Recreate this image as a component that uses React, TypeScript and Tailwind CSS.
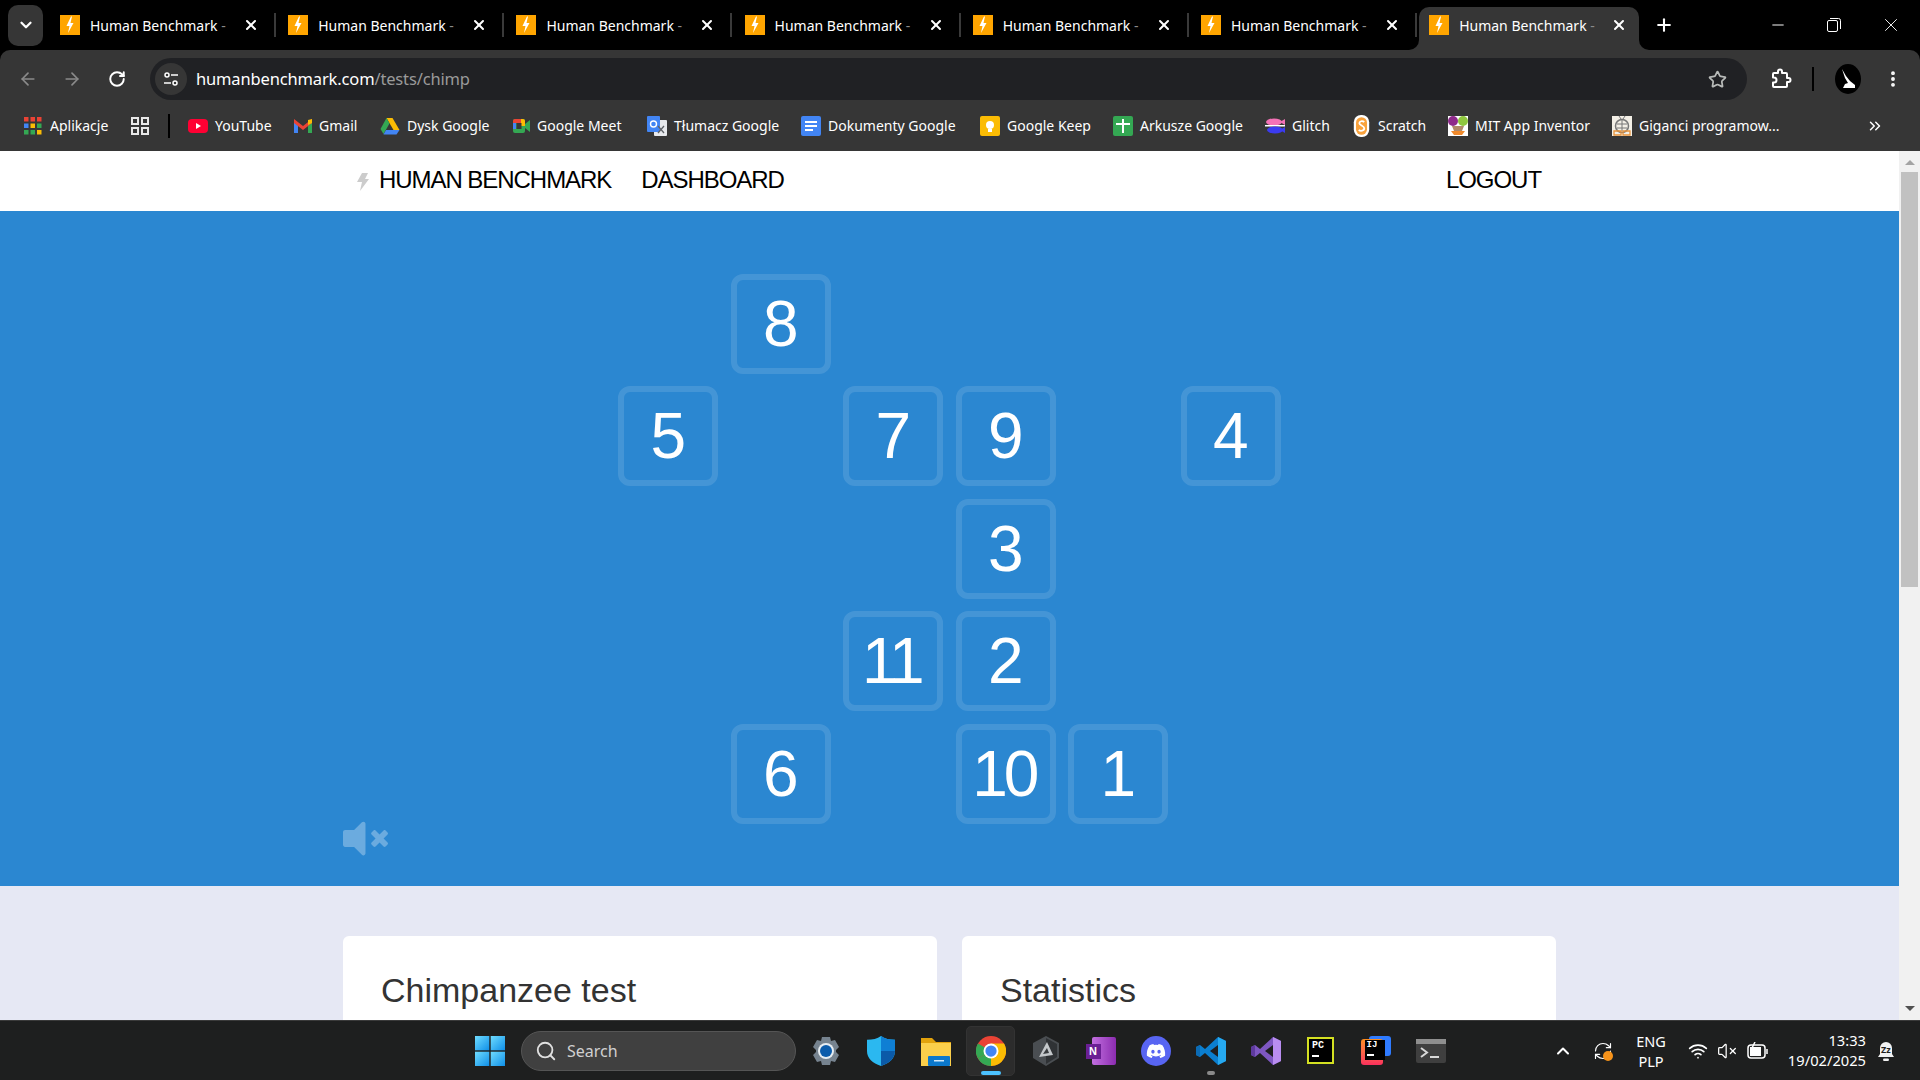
import React from 'react';
import {
  ArrowLeft,
  ArrowRight,
  ChevronDown,
  ChevronUp,
  ChevronsRight,
  EllipsisVertical,
  Minus,
  Plus,
  RefreshCw,
  RotateCw,
  Search,
  Star,
  VolumeX,
  Wifi,
  X,
} from 'lucide-react';
import { FaDiscord, FaVolumeMute } from 'react-icons/fa';

const uiFont = "font-['Noto_Sans',sans-serif]";

const Favicon = () => (
  <svg viewBox="0 0 20 20" className="w-5 h-5 shrink-0">
    <rect width="20" height="20" fill="#ffa500" />
    <path d="M11 1.500 6.500 11h3L8 18l5.500-10h-3l1.500-6.500z" fill="#fff" />
  </svg>
);

const TabTitle = () => (
  <span className="ml-[10px] w-[137px] whitespace-nowrap text-[14px] text-white">
    Human Benchmark <span className="text-[#8a8a8a]">-</span>
  </span>
);

const Tab = ({ active }: { active?: boolean }) => {
  if (active) {
    return (
      <div className="relative flex items-center w-[220px] h-[43px] mt-[7px] pb-[7px] pl-[10px] bg-[#363636] rounded-t-[10px]">
        <div className="absolute left-[-10px] bottom-0 w-[10px] h-[10px] bg-[#363636]">
          <div className="w-full h-full bg-black rounded-br-[10px]" />
        </div>
        <div className="absolute right-[-10px] bottom-0 w-[10px] h-[10px] bg-[#363636]">
          <div className="w-full h-full bg-black rounded-bl-[10px]" />
        </div>
        <Favicon />
        <TabTitle />
        <X size={16} strokeWidth={3} className="ml-[15px] text-white" />
      </div>
    );
  }
  return (
    <div className="flex items-center w-[228.2px] h-[50px] pl-[10px]">
      <Favicon />
      <TabTitle />
      <X size={16} strokeWidth={3} className="ml-[16px] text-white" />
      <div className="ml-[15px] w-[2px] h-[24px] bg-[#3a3a3a]" />
    </div>
  );
};

const TabStrip = () => (
  <div className={`flex h-[50px] shrink-0 bg-black ${uiFont}`}>
    <div className="flex items-center pl-2 w-[50px] shrink-0">
      <div className="flex items-center justify-center w-[35px] h-[41px] rounded-[10px] bg-[#363636]">
        <ChevronDown size={18} strokeWidth={3} className="text-white" />
      </div>
    </div>
    {[0, 1, 2, 3, 4, 5].map((i) => (
      <Tab key={i} />
    ))}
    <Tab active />
    <div className="flex items-center ml-[15px]">
      <Plus size={20} strokeWidth={2.5} className="text-white" />
    </div>
    <div className="flex items-center ml-auto text-white">
      <div className="flex justify-center w-[56px]">
        <Minus size={18} strokeWidth={1.3} />
      </div>
      <div className="flex justify-center w-[56px]">
        <svg viewBox="0 0 14 14" className="w-[14px] h-[14px]" fill="none" stroke="currentColor">
          <rect x="0.5" y="2.5" width="10" height="11" rx="1.5" />
          <path d="M3 0.5h8.5a2 2 0 0 1 2 2V11" />
        </svg>
      </div>
      <div className="flex justify-center w-[58px]">
        <X size={22} strokeWidth={1} />
      </div>
    </div>
  </div>
);

const ExtensionIcon = () => (
  <svg viewBox="0 0 22 22" className="w-[22px] h-[22px]" fill="none" stroke="#fff" strokeWidth="2" strokeLinejoin="round">
    <path d="M8 3.500a2 2 0 0 1 4 0V5h4a1 1 0 0 1 1 1v4h1.500a2 2 0 0 1 0 4H17v4a1 1 0 0 1-1 1H4a1 1 0 0 1-1-1v-3.500h1a2.500 2.500 0 0 0 0-5H3V6a1 1 0 0 1 1-1h4z" />
  </svg>
);

const Toolbar = () => (
  <div className="flex items-center h-[50px] shrink-0 pt-[8px] pl-[10px] bg-[#363636] rounded-t-[10px]">
    <div className="flex items-center justify-center w-[36px]">
      <ArrowLeft size={20} className="text-[#8a8a8a]" />
    </div>
    <div className="flex items-center justify-center w-[36px] ml-[8px]">
      <ArrowRight size={20} className="text-[#8a8a8a]" />
    </div>
    <div className="flex items-center justify-center w-[36px] ml-[9px]">
      <RotateCw size={18} strokeWidth={2.6} className="text-white" />
    </div>
    <div className={`flex items-center w-[1597px] h-[42px] ml-[15px] pl-[5px] pr-[20px] rounded-full bg-[#202124] ${uiFont}`}>
      <div className="flex items-center justify-center w-[32px] h-[32px] rounded-full bg-[#363636]">
        <svg viewBox="0 0 16 16" className="w-4 h-4" fill="none" stroke="#fff" strokeWidth="1.5">
          <circle cx="4" cy="4" r="2" />
          <path d="M8 4h7M1 12h7" />
          <circle cx="12" cy="12" r="2" />
        </svg>
      </div>
      <span className="ml-[9px] mt-[1px] text-[16.5px] tracking-[-0.15px] text-white">
        humanbenchmark.com<span className="text-[#9a9a9a]">/tests/chimp</span>
      </span>
      <Star size={19} strokeWidth={2.2} className="ml-auto text-[#b8bbb9]" />
    </div>
    <div className="flex items-center justify-center w-[40px] ml-[14px]">
      <ExtensionIcon />
    </div>
    <div className="w-[2px] h-[24px] ml-[11px] bg-black" />
    <svg viewBox="0 0 26 30" className="w-[26px] h-[30px] ml-[21px]">
      <ellipse cx="13" cy="15" rx="13" ry="15" fill="#000" />
      <path d="M7 5l4 7 4 5 5 4v3H8l2-4 3-1-3-5z" fill="#fff" />
    </svg>
    <EllipsisVertical size={20} strokeWidth={2.6} className="ml-[22px] text-white" />
  </div>
);

const AppsIcon = () => (
  <svg viewBox="0 0 18 18" className="w-[18px] h-[18px]">
    {['#ea4335', '#ea4335', '#ea4335', '#4285f4', '#fbbc04', '#34a853', '#34a853', '#34a853', '#fbbc04'].map((c, i) => (
      <rect key={i} x={(i % 3) * 6.5} y={Math.floor(i / 3) * 6.5} width="4.5" height="4.5" fill={c} />
    ))}
  </svg>
);

const YouTubeIcon = () => (
  <svg viewBox="0 0 20 20" className="w-5 h-5">
    <rect y="3" width="20" height="14" rx="4" fill="#ff0033" />
    <path d="M8 7l5 3-5 3z" fill="#fff" />
  </svg>
);

const GmailIcon = () => (
  <svg viewBox="0 0 18 18" className="w-[18px] h-[18px]">
    <path d="M0 5v11h4V8z" fill="#4285f4" />
    <path d="M14 8v8h4V5z" fill="#34a853" />
    <path d="M0 2l9 7 9-7v4L9 13 0 6z" fill="#ea4335" />
    <path d="M14 3l4-1v4l-4 2z" fill="#fbbc04" />
  </svg>
);

const DriveIcon = () => (
  <svg viewBox="0 0 20 18" className="w-5 h-[18px]">
    <path d="M6.500 1h6l7 12h-6z" fill="#fbbc04" />
    <path d="M6.500 1l3 5.500L3.500 17 0.500 12z" fill="#34a853" />
    <path d="M6 13h13.500l-3 4.500h-13z" fill="#4285f4" />
  </svg>
);

const MeetIcon = () => (
  <svg viewBox="0 0 18 18" className="w-[18px] h-[18px]">
    <rect x="1" y="2" width="12" height="14" rx="2" fill="#34a853" />
    <path d="M1 6V4a2 2 0 0 1 2-2h6v4z" fill="#ea4335" />
    <path d="M9 2h2a2 2 0 0 1 2 2v5H9z" fill="#fbbc04" />
    <path d="M1 6h3v6H1z" fill="#4285f4" />
    <rect x="4.500" y="6" width="5" height="6" fill="#363636" />
    <path d="M13 7l5-4v12l-5-4z" fill="#34a853" />
  </svg>
);

const TranslateIcon = () => (
  <svg viewBox="0 0 20 20" className="w-5 h-5">
    <rect x="7" y="4" width="13" height="16" rx="1" fill="#e8eaed" />
    <rect width="13" height="16" rx="1" fill="#4285f4" />
    <circle cx="6.500" cy="8" r="3" fill="none" stroke="#fff" strokeWidth="1.400" />
    <path d="M11 10l6 7M17 10l-6 7" stroke="#5f6368" strokeWidth="1.300" />
  </svg>
);

const DocsIcon = () => (
  <svg viewBox="0 0 20 20" className="w-5 h-5">
    <rect width="20" height="20" rx="2" fill="#4285f4" />
    <path d="M4 5h12v2H4zM4 9h12v2H4zM4 13h8v2H4z" fill="#fff" />
  </svg>
);

const KeepIcon = () => (
  <svg viewBox="0 0 20 20" className="w-5 h-5">
    <rect width="20" height="20" rx="2" fill="#fbbc04" />
    <circle cx="10" cy="9" r="4" fill="#fff" />
    <rect x="8" y="13" width="4" height="3" fill="#fff" />
  </svg>
);

const SheetsIcon = () => (
  <svg viewBox="0 0 20 20" className="w-5 h-5">
    <rect width="20" height="20" rx="2" fill="#34a853" />
    <path d="M3 7h14v2H3zM9 3h2v14H9z" fill="#fff" />
  </svg>
);

const GlitchIcon = () => (
  <svg viewBox="0 0 20 18" className="w-5 h-[18px]">
    <ellipse cx="9" cy="5" rx="8" ry="3.500" fill="#f472b6" />
    <path d="M15 5l5-3v6z" fill="#f472b6" />
    <rect y="8" width="20" height="1.500" fill="#fff" />
    <ellipse cx="10" cy="13" rx="8" ry="3.500" fill="#3b3bf0" />
    <path d="M15 13l5-3v6z" fill="#3b3bf0" />
  </svg>
);

const ScratchIcon = () => (
  <svg viewBox="0 0 16 20" className="w-[19px] h-[22px]">
    <rect x="1" y="0" width="14" height="20" rx="6.500" fill="#fff" />
    <rect x="3" y="2" width="10" height="16" rx="5" fill="#f9a23c" />
    <path d="M10.500 6.500C9 5 6 5.500 6 7.500s4.500 2 4.500 4.500S7 15 5.500 13.500" fill="none" stroke="#fff" strokeWidth="1.600" />
  </svg>
);

const MitIcon = () => (
  <svg viewBox="0 0 20 20" className="w-5 h-5">
    <rect width="20" height="20" fill="#fff" />
    <circle cx="5" cy="5" r="5" fill="#8e2a8b" />
    <circle cx="15" cy="5" r="5" fill="#8fc73e" />
    <path d="M4 10h12l-2 5H6z" fill="#b08968" />
    <path d="M3 15h14l-3 4H6z" fill="#f08a2c" />
  </svg>
);

const GiganciIcon = () => (
  <svg viewBox="0 0 20 20" className="w-5 h-5">
    <rect width="20" height="20" fill="#f3efe6" />
    <circle cx="10" cy="10" r="6.500" fill="none" stroke="#777" strokeWidth="1.500" />
    <path d="M10 3v12M5 8h10M5 12h10" stroke="#777" />
    <path d="M2 15h7v4H2zM11 15h7v4h-7z" fill="none" stroke="#e8923a" strokeWidth="1.300" />
    <path d="M7 0l2 3M13 0l-2 3" stroke="#777" />
  </svg>
);

const bookmarks: { label: string; icon: React.ReactNode; cls: string }[] = [
  { label: 'YouTube', icon: <YouTubeIcon />, cls: 'w-[106px]' },
  { label: 'Gmail', icon: <GmailIcon />, cls: 'w-[86px]' },
  { label: 'Dysk Google', icon: <DriveIcon />, cls: 'w-[132px]' },
  { label: 'Google Meet', icon: <MeetIcon />, cls: 'w-[135px]' },
  { label: 'Tłumacz Google', icon: <TranslateIcon />, cls: 'w-[154px]' },
  { label: 'Dokumenty Google', icon: <DocsIcon />, cls: 'w-[179px]' },
  { label: 'Google Keep', icon: <KeepIcon />, cls: 'w-[133px]' },
  { label: 'Arkusze Google', icon: <SheetsIcon />, cls: 'w-[152px]' },
  { label: 'Glitch', icon: <GlitchIcon />, cls: 'w-[87px]' },
  { label: 'Scratch', icon: <ScratchIcon />, cls: 'w-[96px]' },
  { label: 'MIT App Inventor', icon: <MitIcon />, cls: 'w-[164px]' },
  { label: 'Giganci programow...', icon: <GiganciIcon />, cls: 'w-[200px]' },
];

const BookmarkBar = () => (
  <div className={`flex items-center h-[51px] shrink-0 pl-[24px] bg-[#363636] text-[14px] text-white ${uiFont}`}>
    <div className="flex items-center gap-[8px] w-[107px]">
      <AppsIcon />
      <span>Aplikacje</span>
    </div>
    <svg viewBox="0 0 18 18" className="w-[18px] h-[18px]" fill="none" stroke="#e8e8e8" strokeWidth="2">
      <rect x="1" y="1" width="6" height="6" />
      <rect x="11" y="1" width="6" height="6" />
      <rect x="1" y="11" width="6" height="6" />
      <rect x="11" y="11" width="6" height="6" />
    </svg>
    <div className="w-[2px] h-[24px] ml-[19px] mr-[18px] bg-black" />
    {bookmarks.map((b) => (
      <div key={b.label} className={`flex items-center gap-[7px] shrink-0 whitespace-nowrap ${b.cls}`}>
        {b.icon}
        <span>{b.label}</span>
      </div>
    ))}
    <ChevronsRight size={18} className="ml-[54px]" />
  </div>
);

const grid: (number | null)[] = [
  null, 8, null, null, null, null,
  5, null, 7, 9, null, 4,
  null, null, null, 3, null, null,
  null, null, 11, 2, null, null,
  null, 6, null, 10, 1, null,
];

const GameCell = ({ value }: { value: number }) => (
  <div className={`flex items-center justify-center w-[100px] h-[100px] border-[6px] border-white/12 rounded-[12px] text-[64px] text-white ${value > 9 ? 'tracking-[-4px] pr-[4px]' : ''}`}>
    {value}
  </div>
);

const Game = () => (
  <div className="relative flex justify-center pt-[62.75px] pb-[62.25px] bg-[#2b87d1]">
    <div className="grid grid-cols-[repeat(6,100px)] grid-rows-[repeat(5,100px)] gap-[12.5px]">
      {grid.map((v, i) => (v === null ? <div key={i} /> : <GameCell key={i} value={v} />))}
    </div>
    <FaVolumeMute size={45} className="absolute left-[343px] bottom-[25px] text-white/30" />
  </div>
);

const Page = () => (
  <div className="relative flex-1 min-w-0 overflow-hidden bg-[#e6e8f4] font-['Liberation_Sans',sans-serif]">
    <nav className="h-[60px] pb-[2px] bg-white text-[24px] tracking-[-1.05px] text-black">
      <div className="flex items-center w-[1213px] h-full mx-auto pl-[14px] pr-[15px]">
        <svg viewBox="0 0 12 18" className="w-[12px] h-[18px] mt-[4px]">
          <path d="M5 0h6L8 6h4L3 18l2-9H0z" fill="#cccccc" />
        </svg>
        <span className="ml-[10px]">HUMAN BENCHMARK</span>
        <span className="ml-[30px]">DASHBOARD</span>
        <span className="ml-auto">LOGOUT</span>
      </div>
    </nav>
    <Game />
    <div className="grid grid-cols-2 gap-[25px] w-[1213px] mx-auto mt-[50px]">
      <div className="h-[400px] pt-[34px] px-[38px] bg-white rounded-[6px] text-[34px] leading-[40px] text-[#333]">
        Chimpanzee test
      </div>
      <div className="h-[400px] pt-[34px] px-[38px] bg-white rounded-[6px] text-[34px] leading-[40px] text-[#333]">
        Statistics
      </div>
    </div>
  </div>
);

const Scrollbar = () => (
  <div className="flex flex-col items-center w-[21px] shrink-0 pt-[9px] bg-[#f1f1f1]">
    <div className="w-0 h-0 border-x-[5px] border-x-transparent border-b-[5px] border-b-[#a3a3a3]" />
    <div className="w-[17px] h-[415px] mt-[7px] bg-[#c1c1c1]" />
    <div className="mt-auto mb-[9px] w-0 h-0 border-x-[5px] border-x-transparent border-t-[5px] border-t-[#505050]" />
  </div>
);

const WinLogo = () => (
  <svg viewBox="0 0 30 30" className="w-[30px] h-[30px]">
    <defs>
      <linearGradient id="win" x1="0" y1="0" x2="1" y2="1">
        <stop offset="0" stopColor="#6fdcff" />
        <stop offset="1" stopColor="#0f8fe8" />
      </linearGradient>
    </defs>
    <rect width="14.300" height="14.300" fill="url(#win)" />
    <rect x="15.700" width="14.300" height="14.300" fill="url(#win)" />
    <rect y="15.700" width="14.300" height="14.300" fill="url(#win)" />
    <rect x="15.700" y="15.700" width="14.300" height="14.300" fill="url(#win)" />
  </svg>
);

const SettingsIcon = () => (
  <svg viewBox="0 0 30 30" className="w-[30px] h-[30px]">
    <path
      d="M11 1h8l1 4 4-1 4 7-3 3v2l3 3-4 7-4-1-1 4h-8l-1-4-4 1-4-7 3-3v-2L2 11l4-7 4 1z"
      fill="#76838f"
    />
    <circle cx="15" cy="15" r="8" fill="#e6edf2" />
    <circle cx="15" cy="15" r="6" fill="#0b5cab" />
  </svg>
);

const ShieldIcon = () => (
  <svg viewBox="0 0 30 32" className="w-[28px] h-[30px]">
    <path d="M15 0c4 3 9 4 15 4v12c0 8-6 13-15 16C6 29 0 24 0 16V4c6 0 11-1 15-4z" fill="#2bb8f0" />
    <path d="M15 0c4 3 9 4 15 4v12H15z" fill="#0f7fd4" />
    <path d="M15 16h15c0 8-6 13-15 16z" fill="#0b5aa8" />
  </svg>
);

const FolderIcon = () => (
  <svg viewBox="0 0 30 30" className="w-[30px] h-[30px]">
    <path d="M0 2h11l4 4h15v4H0z" fill="#e2a20c" />
    <rect y="7" width="30" height="23" fill="#fbcf4b" />
    <rect x="7" y="20" width="22" height="10" fill="#0b78cc" rx="1" />
    <rect x="13" y="24" width="10" height="1.500" fill="#cfe8fb" />
  </svg>
);

const ChromeIcon = () => (
  <svg viewBox="0 0 32 32" className="w-[30px] h-[30px]">
    <circle cx="16" cy="16" r="16" fill="#ea4335" />
    <path d="M16 16 2.100 24A16 16 0 0 1 2.100 8z" fill="#34a853" />
    <path d="M16 16 2.100 24A16 16 0 0 0 16 32z" fill="#34a853" />
    <path d="M16 16v16A16 16 0 0 0 29.900 8H16z" fill="#fbbc04" />
    <circle cx="16" cy="16" r="8" fill="#fff" />
    <circle cx="16" cy="16" r="6" fill="#4285f4" />
  </svg>
);

const HexIcon = () => (
  <svg viewBox="0 0 26 30" className="w-[26px] h-[30px]">
    <path d="M13 0l13 7v15l-13 8L0 22V7z" fill="#4a4e52" />
    <path d="M13 2l11 6v13l-11 7z" fill="#2f3235" />
    <path d="M14 6l6 13-14 2z" fill="#c4c8cb" />
    <path d="M14 12l2 5-6 1z" fill="#3a3d40" />
  </svg>
);

const OneNoteIcon = () => (
  <div className="relative flex w-[30px] h-[28px]">
    <div className="ml-[6px] w-[24px] h-[28px] rounded-[2px] bg-gradient-to-r from-[#c26ee0] to-[#8c2bb0]" />
    <div className="absolute left-0 top-[7px] flex items-center justify-center w-[15px] h-[15px] bg-[#6b1f94] text-[11px] font-bold text-white font-['Liberation_Sans',sans-serif]">
      N
    </div>
  </div>
);

const DiscordIcon = () => (
  <div className="flex items-center justify-center w-[30px] h-[30px] rounded-full bg-[#5865f2]">
    <FaDiscord size={20} className="text-white" />
  </div>
);

const VsCodeIcon = () => (
  <svg viewBox="0 0 30 30" className="w-[30px] h-[30px]">
    <path d="M22 1l8 4v20l-8 4-13-12-5 4-4-2V11l4-2 5 4z" fill="#0b7fd0" />
    <path d="M22 1l8 4v20l-8 4z" fill="#26a9f0" />
    <path d="M22 9v12l-8-6z" fill="#1e1f20" />
    <path d="M0 11l4-2v12l-4-2z" fill="#0b6bb5" />
  </svg>
);

const VsIcon = () => (
  <svg viewBox="0 0 30 30" className="w-[30px] h-[30px]">
    <path d="M22 1l8 4v20l-8 4-13-12-5 4-4-2V11l4-2 5 4z" fill="#7e57c2" />
    <path d="M22 1l8 4v20l-8 4z" fill="#b98df0" />
    <path d="M22 9v12l-8-6z" fill="#1e1f20" />
    <path d="M0 11l4-2v12l-4-2z" fill="#5e3a9e" />
  </svg>
);

const PyCharmIcon = () => (
  <div className="flex flex-col w-[27px] h-[27px] border-[2px] border-[#d4e022] bg-black pl-[3px] pt-[1px] font-['Liberation_Mono',monospace] text-[10px] font-bold leading-[11px] text-white">
    PC
    <div className="w-[7px] h-[2px] mt-[4px] bg-white" />
  </div>
);

const IdeaIcon = () => (
  <div className="relative w-[30px] h-[30px]">
    <div className="absolute right-0 top-0 w-[22px] h-[20px] rounded-[3px] bg-[#2f7bff]" />
    <div className="absolute left-0 top-[3px] w-[22px] h-[26px] rounded-[3px] bg-gradient-to-b from-[#f98b1d] to-[#fb2e5c]" />
    <div className="absolute left-[4px] top-[4px] flex flex-col w-[20px] h-[20px] pl-[2px] bg-black font-['Liberation_Mono',monospace] text-[9px] font-bold leading-[11px] text-white">
      IJ
      <div className="w-[7px] h-[2px] mt-[3px] bg-white" />
    </div>
  </div>
);

const TerminalIcon = () => (
  <svg viewBox="0 0 30 24" className="w-[30px] h-[24px]">
    <rect width="30" height="24" rx="2" fill="#3f3f3f" />
    <rect width="30" height="5" fill="#8f8f8f" />
    <path d="M5 9l6 4.500-6 4.500" fill="none" stroke="#d8d8d8" strokeWidth="2" />
    <rect x="14" y="17" width="9" height="2" fill="#d8d8d8" />
  </svg>
);

const TaskIcon = ({ children, active, open }: { children: React.ReactNode; active?: boolean; open?: boolean }) => (
  <div className="relative flex items-center justify-center w-[55px] h-[50px]">
    {active && <div className="absolute inset-x-[3px] inset-y-0 rounded-[5px] border border-[#333] bg-[#2c2c2c]" />}
    <div className="relative">{children}</div>
    {active && <div className="absolute bottom-[1px] w-[20px] h-[4px] rounded-full bg-[#4cc2ff]" />}
    {open && <div className="absolute bottom-[1px] w-[8px] h-[4px] rounded-full bg-[#8a8a8a]" />}
  </div>
);

const Taskbar = () => (
  <div className={`flex items-center h-[60px] shrink-0 pl-[462px] pr-[19px] border-t border-[#3a3a3a] bg-[#1e1f1f] text-white ${uiFont}`}>
    <div className="flex items-center justify-center w-[55px] shrink-0">
      <WinLogo />
    </div>
    <div className="flex items-center w-[275px] h-[40px] ml-[4px] pl-[13px] rounded-full border border-[#555] bg-[#404040] text-[16px] text-[#d0d0d0]">
      <Search size={22} className="text-[#e0e0e0]" />
      <span className="ml-[10px]">Search</span>
    </div>
    <div className="flex items-center ml-[2px]">
      <TaskIcon><SettingsIcon /></TaskIcon>
      <TaskIcon><ShieldIcon /></TaskIcon>
      <TaskIcon><FolderIcon /></TaskIcon>
      <TaskIcon active><ChromeIcon /></TaskIcon>
      <TaskIcon><HexIcon /></TaskIcon>
      <TaskIcon><OneNoteIcon /></TaskIcon>
      <TaskIcon><DiscordIcon /></TaskIcon>
      <TaskIcon open><VsCodeIcon /></TaskIcon>
      <TaskIcon><VsIcon /></TaskIcon>
      <TaskIcon><PyCharmIcon /></TaskIcon>
      <TaskIcon><IdeaIcon /></TaskIcon>
      <TaskIcon><TerminalIcon /></TaskIcon>
    </div>
    <div className="flex items-center ml-auto">
      <div className="flex justify-center w-[40px]">
        <ChevronUp size={20} strokeWidth={2.4} />
      </div>
      <div className="relative flex justify-center w-[40px]">
        <RefreshCw size={20} strokeWidth={1.4} />
        <div className="absolute left-[20px] top-[10px] w-[10px] h-[10px] rounded-full bg-[#f7931a]" />
      </div>
      <div className="flex flex-col items-center w-[56px] mr-[4px] text-[14.5px] leading-[20px]">
        <span>ENG</span>
        <span>PLP</span>
      </div>
      <div className="flex justify-center w-[29px]">
        <Wifi size={20} />
      </div>
      <div className="flex justify-center w-[30px]">
        <VolumeX size={20} strokeWidth={1.5} />
      </div>
      <div className="flex justify-center w-[32px]">
        <svg viewBox="0 0 22 18" className="w-[22px] h-[18px]" fill="none" stroke="#fff" strokeWidth="1.500">
          <rect x="1" y="3" width="17" height="13" rx="3" />
          <rect x="3" y="5" width="11" height="9" fill="#fff" stroke="none" />
          <path d="M20 7v5" />
          <path d="M8 0 5 6h4l-2 5" />
        </svg>
      </div>
      <div className="flex flex-col items-end w-[92px] mr-[5px] mb-[2px] text-[14.7px] leading-[20px]">
        <span>13:33</span>
        <span>19/02/2025</span>
      </div>
      <div className="relative flex justify-center w-[30px]">
        <svg viewBox="0 0 18 22" className="w-[18px] h-[22px]" fill="#f2f2f2">
          <path d="M9 2a6 6 0 0 1 6 6v6l2 3H1l2-3V8a6 6 0 0 1 6-6z" />
          <rect x="6" y="18.500" width="6" height="2.500" rx="1.200" />
        </svg>
        <span className="absolute top-[3px] left-[10px] text-[9px] font-bold leading-[14px] text-[#1e1f1f]">Zz</span>
      </div>
    </div>
  </div>
);

export default function App() {
  return (
    <div className="flex flex-col w-screen h-screen overflow-hidden bg-black">
      <TabStrip />
      <Toolbar />
      <BookmarkBar />
      <div className="flex flex-1 min-h-0">
        <Page />
        <Scrollbar />
      </div>
      <Taskbar />
    </div>
  );
}
